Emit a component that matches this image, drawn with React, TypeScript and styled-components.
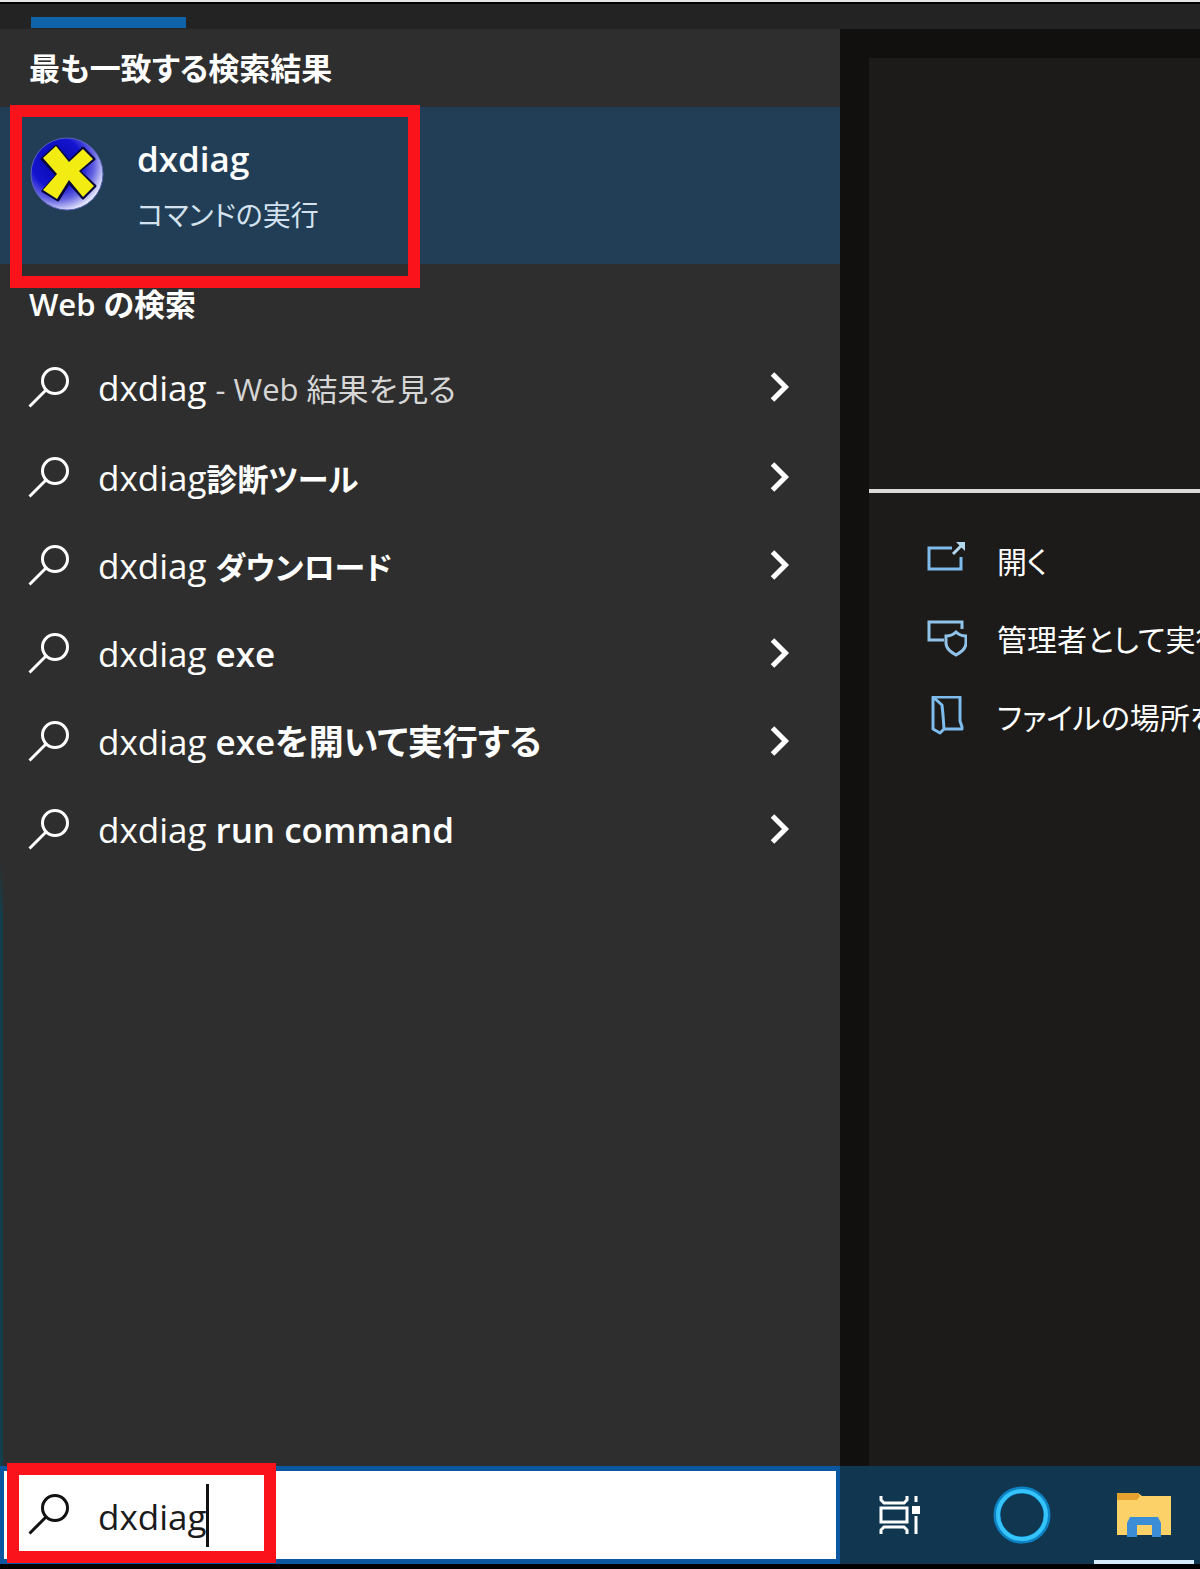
import React from "react";
import styled, { createGlobalStyle } from "styled-components";

const GlobalStyle = createGlobalStyle`
  *, *::before, *::after { box-sizing: border-box; }
  body {
    margin: 0;
    background: #000;
    font-family: "Open Sans", "Noto Sans CJK JP", sans-serif;
    font-feature-settings: "palt";
  }
`;

const Screen = styled.div`
  display: flex;
  flex-direction: column;
  min-height: 100vh;
  overflow: hidden;
  background: #232323;
  border-top: 2px solid #e4e4e4;
  border-bottom: 5px solid #000;
`;

const TabStrip = styled.header`
  display: flex;
  align-items: flex-end;
  height: 27px;
  padding: 0 31px 1px;
  border-top: 2px solid #000;
`;

const ActiveTab = styled.div`
  width: 155px;
  height: 11px;
  background: #0f63a9;
`;

const Panels = styled.main`
  display: flex;
  flex: 1;
`;

const Results = styled.section`
  flex: 0 0 70%;
  background:
    linear-gradient(#2e2e2e 58%, #123f4e 62%) left / 3px 100% no-repeat,
    #2e2e2e;
`;

const GroupTitle = styled.h2<{ $tall?: boolean }>`
  display: flex;
  align-items: center;
  height: ${(p) => (p.$tall ? 78 : 80)}px;
  margin: 0;
  padding-left: 29px;
  color: #fff;
  font-size: 31px;
  font-weight: 600;
  line-height: 40px;
`;

const BestMatchWrap = styled.div`
  position: relative;
`;

const BestMatch = styled.button`
  display: flex;
  align-items: flex-start;
  gap: 32px;
  width: 100%;
  height: 157px;
  padding: 28px 30px;
  border: 0;
  background: #213e56;
  color: #fff;
  font: inherit;
  font-feature-settings: inherit;
  text-align: left;
`;

const BestMatchText = styled.span`
  display: flex;
  flex-direction: column;
`;

const AppName = styled.span`
  font-size: 35px;
  font-weight: 600;
  line-height: 48px;
`;

const AppKind = styled.span`
  color: #d3e2ee;
  font-size: 28px;
  line-height: 64px;
`;

const Highlight = styled.div`
  position: absolute;
  border: 12px solid #fb131c;
  pointer-events: none;
`;

const BestMatchHighlight = styled(Highlight)`
  top: -2px;
  left: 10px;
  width: 410px;
  height: 183px;
`;

const SearchHighlight = styled(Highlight)`
  top: -3px;
  left: 7px;
  width: 269px;
  height: 100px;
`;

const SuggestionList = styled.ul`
  margin: 0;
  padding: 0;
  list-style: none;

  li:first-child { margin-bottom: 2px; }
`;

const Suggestion = styled.button`
  display: flex;
  align-items: center;
  width: 100%;
  height: 88px;
  padding: 0 50px 0 28px;
  border: 0;
  background: transparent;
  color: #fff;
  font: inherit;
  font-feature-settings: inherit;
  font-size: 35px;
  line-height: 48px;
  text-align: left;
  white-space: pre;
`;

const SuggestionText = styled.span`
  flex: 1;
  padding-left: 28px;
`;

const Completion = styled.strong<{ $compact?: boolean }>`
  font-size: ${(p) => (p.$compact ? 31 : 35)}px;
  font-weight: 600;
`;

const Hint = styled.small`
  color: #d6d6d6;
  font-size: 31px;
`;

const Detail = styled.section`
  display: flex;
  flex: 1;
  min-width: 0;
  padding: 29px 0 0 29px;
  background: #11100f;
`;

const DetailCard = styled.div`
  flex: 1;
  min-width: 0;
  overflow: hidden;
  background: #1c1b19;
`;

const DetailHero = styled.div`
  height: 435px;
  border-bottom: 4px solid #dcdad8;
`;

const ActionList = styled.ul`
  margin: 0;
  padding: 30px 0 0 56px;
  list-style: none;
`;

const Action = styled.button`
  display: flex;
  align-items: center;
  gap: 30px;
  height: 78px;
  padding: 0;
  border: 0;
  background: transparent;
  color: #fff;
  font: inherit;
  font-feature-settings: inherit;
  font-size: 30px;
  line-height: 44px;
  white-space: nowrap;

  svg { flex: none; }
`;

const Taskbar = styled.footer`
  position: relative;
  display: flex;
  height: 98px;
  background: #103650;
`;

const SearchBox = styled.label`
  display: flex;
  align-items: center;
  flex: 0 0 70%;
  padding-left: 24px;
  background: #fff;
  border: solid #0b57a0;
  border-width: 5px 4px;
`;

const SearchInput = styled.input`
  field-sizing: content;
  margin-left: 28px;
  padding: 4px 0 0;
  border: 0;
  outline: 0;
  background: transparent;
  color: #1b1b1b;
  caret-color: transparent;
  font: inherit;
  font-size: 35px;
  line-height: 48px;
`;

const Caret = styled.span`
  width: 3px;
  height: 63px;
  background: #111;
`;

const TaskButtons = styled.nav`
  display: flex;
  flex: 1;
  justify-content: space-between;
  padding: 0 6px 0 9px;
`;

const TaskButton = styled.button<{ $open?: boolean }>`
  display: flex;
  align-items: center;
  justify-content: center;
  width: 100px;
  padding: 4px 0 0;
  border: 0;
  background: transparent;
  border-bottom: 4px solid ${(p) => (p.$open ? "#d5ebfa" : "transparent")};
`;

const SearchIcon = ({ color = "#fff" }: { color?: string }) => (
  <svg width="42" height="42" viewBox="0 0 42 42" fill="none" stroke={color} strokeWidth="3" aria-hidden="true">
    <circle cx="27" cy="14" r="12.5" />
    <path d="M18 23 1.500 39.500" />
  </svg>
);

const Chevron = () => (
  <svg width="20" height="32" viewBox="0 0 20 32" fill="none" stroke="#fff" strokeWidth="5" aria-hidden="true">
    <path d="M2.500 2 15.500 15 2.500 28" />
  </svg>
);

const DirectXIcon = () => (
  <svg width="75" height="76" viewBox="0 0 75 76" aria-hidden="true">
    <defs>
      <radialGradient id="ball" cx="36%" cy="34%" r="70%">
        <stop offset="0" stopColor="#0608a8" />
        <stop offset="0.5" stopColor="#1414d0" />
        <stop offset="0.75" stopColor="#6866e2" />
        <stop offset="1" stopColor="#eceeff" />
      </radialGradient>
    </defs>
    <circle cx="37" cy="39" r="36" fill="url(#ball)" stroke="#5a62b8" strokeWidth="1" />
    <path
      d="M26 11 39 27 53 13 64 24 49 36 65 51 53 63 39 47 28 65 13 56 27 40 12 24Z"
      fill="#06063c"
      stroke="#06063c"
      strokeWidth="3"
      strokeLinejoin="round"
    />
    <path d="M26 11 39 27 53 14 63 24 49 36 64 51 53 62 39 45 27 64 13 55 27 39 13 23Z" fill="#f3ec12" />
  </svg>
);

const OpenIcon = () => (
  <svg width="42" height="44" viewBox="0 0 42 44" fill="none" stroke="#7dbcec" strokeWidth="3" aria-hidden="true">
    <path d="M27 8H4v21h32V17" />
    <path d="M28 14 36 6" stroke="#b4d8ee" />
    <path d="M31 2h9v9Z" fill="#b4d8ee" stroke="none" />
  </svg>
);

const AdminIcon = () => (
  <svg width="42" height="44" viewBox="0 0 42 44" fill="none" stroke="#8fc3ea" strokeWidth="3" aria-hidden="true">
    <path d="M37 11V4H4v18h15" />
    <path d="M31 14C28 17 24 18 21 18v7c0 6 5 9 10 12C36 34 41 31 41 25v-7c-4 0-7-1-10-4Z" />
  </svg>
);

const FolderIcon = () => (
  <svg width="42" height="44" viewBox="0 0 42 44" fill="none" stroke="#7dbcec" strokeWidth="3" strokeLinejoin="round" aria-hidden="true">
    <path d="M8 1h27v24l2 6v2H19" />
    <path d="M8 1v32l7 4 4-4-1-14-1-10Z" />
  </svg>
);

const TaskViewIcon = () => (
  <svg width="44" height="40" viewBox="0 0 44 40" fill="none" stroke="#fff" strokeWidth="3" aria-hidden="true">
    <path d="M4 1v4l3 3h20l3-3V1M4 39v-4l3-3h20l3 3v4M4 13h26v14H4Z" />
    <path d="M39 1v6M39 21v18" />
    <path d="M35 11h8v8h-8Z" fill="#fff" stroke="none" />
  </svg>
);

const CortanaIcon = () => (
  <svg width="60" height="60" viewBox="0 0 60 60" fill="none" aria-hidden="true">
    <circle cx="30" cy="30" r="25" stroke="#0d83c4" strokeWidth="7" />
    <circle cx="30" cy="30" r="24" stroke="#35c4fa" strokeWidth="4" />
  </svg>
);

const ExplorerIcon = () => (
  <svg width="54" height="46" viewBox="0 0 54 46" aria-hidden="true">
    <path d="M0 1h21l4 3h29v39H0Z" fill="#fcd268" />
    <path d="M0 1h21l2 3-3 4H0Z" fill="#e5a12d" />
    <path d="M10 45V31l3-6h28l3 6v14h-9V33H20v12Z" fill="#3b8ed6" />
    <path d="M20 33h15v9H20Z" fill="#fcd268" />
  </svg>
);

const suggestions: React.ReactNode[] = [
  <Hint>- Web 結果を見る</Hint>,
  <Completion $compact>診断ツール</Completion>,
  <Completion $compact>ダウンロード</Completion>,
  <Completion>exe</Completion>,
  <Completion>exeを開いて実行する</Completion>,
  <Completion>run command</Completion>,
];

const actions = [
  { label: "開く", Icon: OpenIcon },
  { label: "管理者として実行", Icon: AdminIcon },
  { label: "ファイルの場所を開く", Icon: FolderIcon },
];

export default function App() {
  return (
    <Screen>
      <GlobalStyle />
      <TabStrip>
        <ActiveTab />
      </TabStrip>
      <Panels>
        <Results>
          <GroupTitle $tall>最も一致する検索結果</GroupTitle>
          <BestMatchWrap>
            <BestMatch>
              <DirectXIcon />
              <BestMatchText>
                <AppName>dxdiag</AppName>
                <AppKind>コマンドの実行</AppKind>
              </BestMatchText>
            </BestMatch>
            <BestMatchHighlight />
          </BestMatchWrap>
          <GroupTitle>Web の検索</GroupTitle>
          <SuggestionList>
            {suggestions.map((completion, i) => (
              <li key={i}>
                <Suggestion>
                  <SearchIcon />
                  <SuggestionText>
                    dxdiag{i === 1 ? "" : " "}
                    {completion}
                  </SuggestionText>
                  <Chevron />
                </Suggestion>
              </li>
            ))}
          </SuggestionList>
        </Results>
        <Detail>
          <DetailCard>
            <DetailHero />
            <ActionList>
              {actions.map(({ label, Icon }) => (
                <li key={label}>
                  <Action>
                    <Icon />
                    {label}
                  </Action>
                </li>
              ))}
            </ActionList>
          </DetailCard>
        </Detail>
      </Panels>
      <Taskbar>
        <SearchBox>
          <SearchIcon color="#111" />
          <SearchInput aria-label="検索" defaultValue="dxdiag" />
          <Caret />
        </SearchBox>
        <TaskButtons>
          <TaskButton aria-label="タスク ビュー">
            <TaskViewIcon />
          </TaskButton>
          <TaskButton aria-label="Cortana">
            <CortanaIcon />
          </TaskButton>
          <TaskButton aria-label="エクスプローラー" $open>
            <ExplorerIcon />
          </TaskButton>
        </TaskButtons>
        <SearchHighlight />
      </Taskbar>
    </Screen>
  );
}
